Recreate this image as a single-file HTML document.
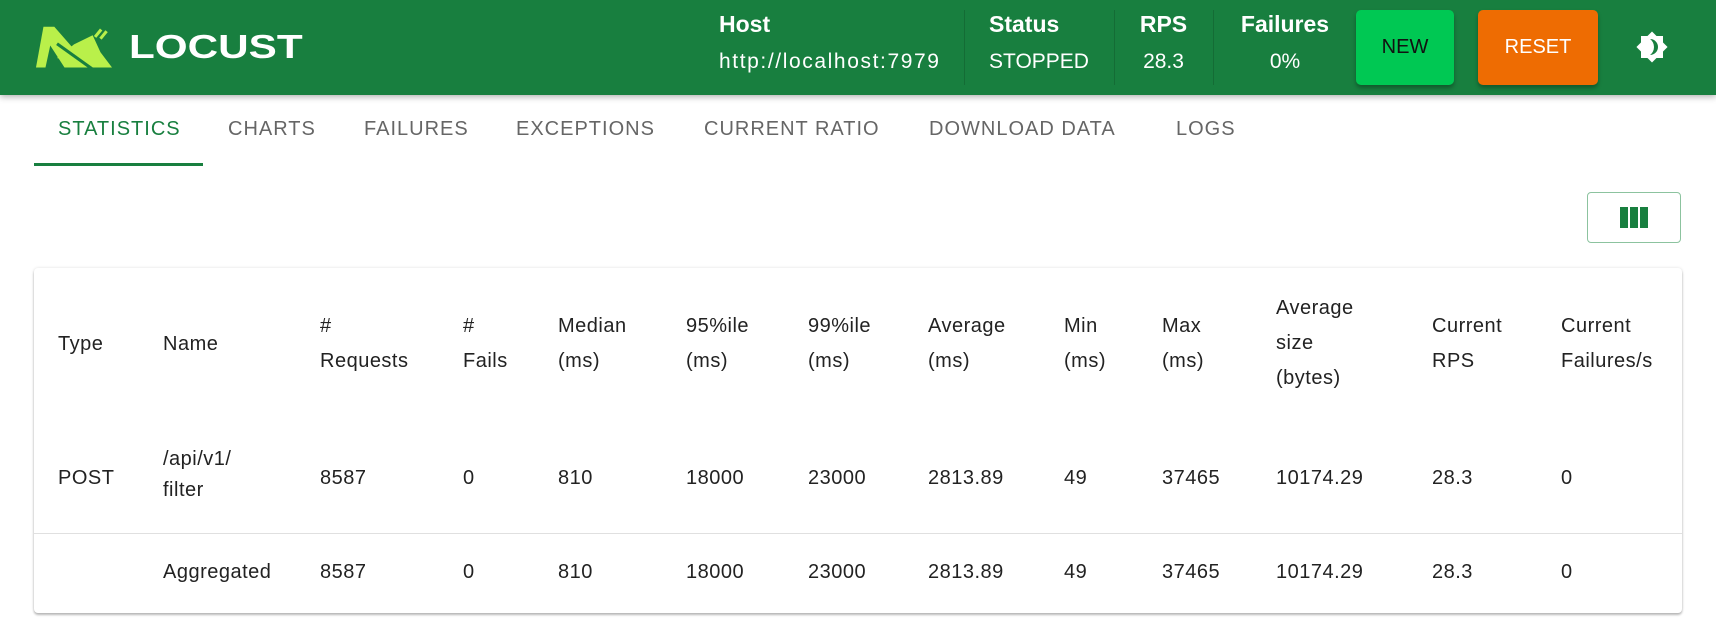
<!DOCTYPE html>
<html><head><meta charset="utf-8"><style>
*{box-sizing:border-box;margin:0;padding:0}
body{width:1716px;height:633px;overflow:hidden;background:#fff;font-family:"Liberation Sans",sans-serif;position:relative}
.hdr{position:absolute;left:0;top:0;width:1716px;height:95px;background:#187f3f;box-shadow:0 2px 6px rgba(0,0,0,.3);color:#fff}
.abs{position:absolute}
.lbl{font-weight:bold;font-size:23px}
.val{font-size:21px}
.div{position:absolute;top:10px;width:1px;height:75px;background:rgba(0,0,0,.15)}
.btn{position:absolute;top:10px;height:75px;border-radius:5px;font-size:20px;display:flex;align-items:center;justify-content:center;box-shadow:0 3px 4px rgba(0,0,0,.3)}
.tab{position:absolute;top:118px;font-size:20px;letter-spacing:1px;color:#666;white-space:nowrap}
.card{position:absolute;left:34px;top:268px;width:1648px;height:345px;background:#fff;border-radius:4px;box-shadow:0 2px 2px rgba(0,0,0,.25),0 0 3px rgba(0,0,0,.12)}
.t{position:absolute;font-size:20px;letter-spacing:0.5px;line-height:35px;color:#222;white-space:nowrap}
.r1{top:461px}.r2{top:555px}
</style></head><body>
<div class="hdr">
 <svg class="abs" style="left:21px;top:20px" width="106" height="56" viewBox="0 0 300 165">
  <polygon points="60,20 92,20 197,140 38,140" fill="#b9f04a"/>
  <polygon points="80,75 66,140 122,140" fill="#187f3f"/>
  <polygon points="100,112 150,72 205,45 228,95 262,140 200,140" fill="#b9f04a"/>
  <line x1="100" y1="70" x2="205" y2="145" stroke="#187f3f" stroke-width="9"/>
  <line x1="212" y1="50" x2="230" y2="28" stroke="#b9f04a" stroke-width="9"/>
  <line x1="228" y1="55" x2="246" y2="33" stroke="#b9f04a" stroke-width="9"/>
 </svg>
 <div class="abs" style="left:129px;top:28px;font-size:33px;font-weight:bold;transform:scaleX(1.28);transform-origin:left">LOCUST</div>
 <div class="abs lbl" style="left:719px;top:11px">Host</div>
 <div class="abs val" style="left:719px;top:50px;letter-spacing:1.6px">http://localhost:7979</div>
 <div class="div" style="left:964px"></div>
 <div class="abs lbl" style="left:989px;top:11px">Status</div>
 <div class="abs val" style="left:989px;top:50px">STOPPED</div>
 <div class="div" style="left:1114px"></div>
 <div class="abs lbl" style="left:1114px;width:99px;text-align:center;top:11px">RPS</div>
 <div class="abs val" style="left:1114px;width:99px;text-align:center;top:50px">28.3</div>
 <div class="div" style="left:1213px"></div>
 <div class="abs lbl" style="left:1213px;width:144px;text-align:center;top:11px">Failures</div>
 <div class="abs val" style="left:1213px;width:144px;text-align:center;top:50px">0%</div>
 <div class="btn" style="left:1356px;width:98px;background:#00c853;color:#111">NEW</div>
 <div class="btn" style="left:1478px;width:120px;background:#ee6c02;color:#fff">RESET</div>
 <svg class="abs" style="left:1635px;top:30px" width="34" height="34" viewBox="0 0 34 34">
  <rect x="6" y="6" width="22" height="22" fill="#fff"/>
  <rect x="6" y="6" width="22" height="22" fill="#fff" transform="rotate(45 17 17)"/>
  <path d="M15 9a8 8 0 0 1 0 16a10 10 0 0 0 0-16z" fill="#187f3f"/>
 </svg>
</div>
<div class="tab" style="left:58px;color:#187f3f">STATISTICS</div>
<div class="abs" style="left:34px;top:163px;width:169px;height:3px;background:#187f3f"></div>
<div class="tab" style="left:228px">CHARTS</div>
<div class="tab" style="left:364px">FAILURES</div>
<div class="tab" style="left:516px">EXCEPTIONS</div>
<div class="tab" style="left:704px">CURRENT RATIO</div>
<div class="tab" style="left:929px">DOWNLOAD DATA</div>
<div class="tab" style="left:1176px">LOGS</div>
<div class="abs" style="left:1587px;top:192px;width:94px;height:51px;border:1px solid #8cc39f;border-radius:4px"></div>
<div class="abs" style="left:1620px;top:207px;width:8px;height:21px;background:#187f3f"></div>
<div class="abs" style="left:1630px;top:207px;width:8px;height:21px;background:#187f3f"></div>
<div class="abs" style="left:1640px;top:207px;width:8px;height:21px;background:#187f3f"></div>
<div class="card">
 <div class="abs" style="left:0;top:265px;width:1648px;height:1px;background:#e0e0e0"></div>
</div>
<div class="t" style="left:58px;top:327px">Type</div>
<div class="t" style="left:163px;top:327px">Name</div>
<div class="t" style="left:320px;top:309px">#<br>Requests</div>
<div class="t" style="left:463px;top:309px">#<br>Fails</div>
<div class="t" style="left:558px;top:309px">Median<br>(ms)</div>
<div class="t" style="left:686px;top:309px">95%ile<br>(ms)</div>
<div class="t" style="left:808px;top:309px">99%ile<br>(ms)</div>
<div class="t" style="left:928px;top:309px">Average<br>(ms)</div>
<div class="t" style="left:1064px;top:309px">Min<br>(ms)</div>
<div class="t" style="left:1162px;top:309px">Max<br>(ms)</div>
<div class="t" style="left:1276px;top:291px">Average<br>size<br>(bytes)</div>
<div class="t" style="left:1432px;top:309px">Current<br>RPS</div>
<div class="t" style="left:1561px;top:309px">Current<br>Failures/s</div>
<div class="t r1" style="left:58px">POST</div>
<div class="t" style="left:163px;top:444px;line-height:31px">/api/v1/<br>filter</div>
<div class="t r1" style="left:320px">8587</div>
<div class="t r1" style="left:463px">0</div>
<div class="t r1" style="left:558px">810</div>
<div class="t r1" style="left:686px">18000</div>
<div class="t r1" style="left:808px">23000</div>
<div class="t r1" style="left:928px">2813.89</div>
<div class="t r1" style="left:1064px">49</div>
<div class="t r1" style="left:1162px">37465</div>
<div class="t r1" style="left:1276px">10174.29</div>
<div class="t r1" style="left:1432px">28.3</div>
<div class="t r1" style="left:1561px">0</div>
<div class="t r2" style="left:163px">Aggregated</div>
<div class="t r2" style="left:320px">8587</div>
<div class="t r2" style="left:463px">0</div>
<div class="t r2" style="left:558px">810</div>
<div class="t r2" style="left:686px">18000</div>
<div class="t r2" style="left:808px">23000</div>
<div class="t r2" style="left:928px">2813.89</div>
<div class="t r2" style="left:1064px">49</div>
<div class="t r2" style="left:1162px">37465</div>
<div class="t r2" style="left:1276px">10174.29</div>
<div class="t r2" style="left:1432px">28.3</div>
<div class="t r2" style="left:1561px">0</div>
</body></html>
